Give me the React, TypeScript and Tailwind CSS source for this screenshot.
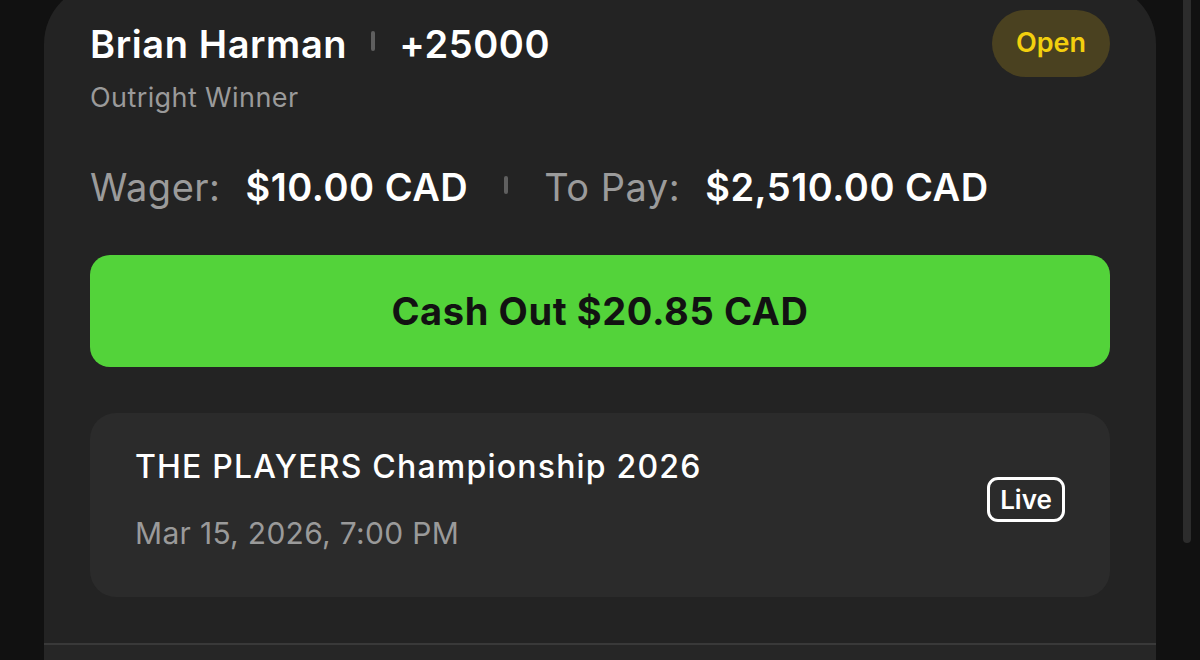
import { ReactNode } from 'react'

function Divider({ className = '' }: { className?: string }) {
  return <span className={`inline-block w-[4px] rounded-full bg-[#5f5f5f] ${className}`} />
}

function Stat({ label, value }: { label: string; value: ReactNode }) {
  return (
    <div className="flex items-baseline gap-[25px]">
      <span className="text-[#9b9b9b] font-normal">{label}</span>
      <span className="text-white font-semibold">{value}</span>
    </div>
  )
}

export default function App() {
  return (
    <div
      className="w-[1200px] h-[660px] overflow-hidden bg-[#111111] relative"
      style={{ fontFamily: 'Inter, "Noto Sans", sans-serif' }}
    >
      {/* edge of the next card */}
      <div className="absolute left-[1183px] top-0 w-[8px] h-[543px] bg-[#2c2c2c] rounded-b-full" />

      <div className="ml-[44px] mt-[-16px] w-[1112px] h-[700px] bg-[#232323] rounded-t-[60px] flex flex-col">
        <div className="px-[46px] pt-[26px] flex flex-col">
          {/* Header */}
          <div className="flex items-start justify-between">
            <div className="flex flex-col">
              <div className="mt-[12px] h-[44px] flex items-center gap-[24px] text-[38px] font-semibold text-white tracking-[0.6px]">
                <span>Brian Harman</span>
                <Divider className="h-[20px] mt-[-6px]" />
                <span>+25000</span>
              </div>
              <div className="mt-[16px] h-[32px] leading-[32px] text-[27px] tracking-[0.4px] text-[#9a9a9a]">Outright Winner</div>
            </div>
            <div className="h-[67px] w-[118px] rounded-full bg-[#4a4120] flex items-center justify-center text-[27px] font-semibold text-[#f3cf0e]">
              Open
            </div>
          </div>

          {/* Wager row */}
          <div className="mt-[51px] h-[44px] flex items-center gap-[36px] text-[38px] tracking-[0.5px]">
            <Stat label="Wager:" value="$10.00 CAD" />
            <Divider className="h-[18px] mt-[-4px]" />
            <Stat label="To Pay:" value="$2,510.00 CAD" />
          </div>

          {/* Cash out */}
          <button className="mt-[46px] h-[112px] w-full rounded-[20px] bg-[#53d33a] text-[#121212] text-[38px] font-bold tracking-[0.6px]">
            Cash Out $20.85 CAD
          </button>

          {/* Event */}
          <div className="mt-[46px] h-[184px] rounded-[26px] bg-[#2b2b2b] pl-[45px] pr-[45px] flex items-center justify-between">
            <div className="flex flex-col mb-[10px]">
              <div className="h-[40px] leading-[40px] text-[32px] font-medium text-white tracking-[1.2px]">THE PLAYERS Championship 2026</div>
              <div className="mt-[26px] h-[40px] leading-[40px] text-[30px] tracking-[0.3px] text-[#9a9a9a]">Mar 15, 2026, 7:00 PM</div>
            </div>
            <div className="mb-[11px] h-[45px] w-[78px] rounded-[11px] border-[3px] border-white flex items-center justify-center text-[26px] font-semibold text-white">
              Live
            </div>
          </div>
        </div>

        <div className="mt-[46px] border-t-[2px] border-[#393939] flex-1 bg-[#262626]" />
      </div>
    </div>
  )
}
